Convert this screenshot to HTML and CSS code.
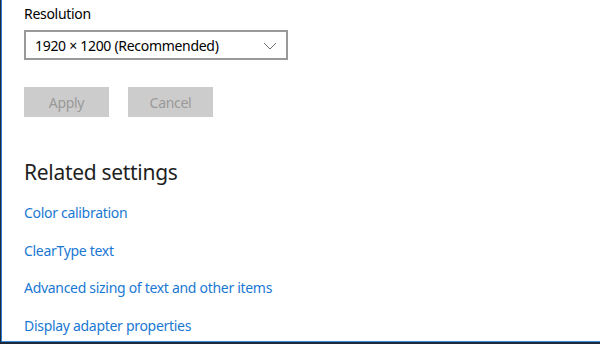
FILE: index.html
```html
<!DOCTYPE html>
<html>
<head>
	<meta charset="utf-8">
	<title>Display settings</title>
	<link rel="stylesheet" href="styles.css">
</head>
<body>
	<div class="window">
		<section class="resolution">
			<div class="label">Resolution</div>
			<div class="select">
				<span>1920 × 1200 (Recommended)</span>
				<svg class="chevron" width="14" height="8" viewBox="0 0 14 8">
					<path d="M1 1 L7 7 L13 1" fill="none" stroke="#6f6f6f" stroke-width="1"/>
				</svg>
			</div>
			<div class="buttons">
				<button class="btn" disabled>Apply</button>
				<button class="btn" disabled>Cancel</button>
			</div>
		</section>

		<section class="related">
			<h2>Related settings</h2>
			<ul class="links">
				<li><a href="#">Color calibration</a></li>
				<li><a href="#">ClearType text</a></li>
				<li><a href="#">Advanced sizing of text and other items</a></li>
				<li><a href="#">Display adapter properties</a></li>
			</ul>
		</section>
	</div>
</body>
</html>
```

FILE: styles.css
```css
html, body {
	margin: 0; height: 100%;
}
body {
	background-color: #1c2a3a; font-family: 'Noto Sans', 'Open Sans', sans-serif; overflow: hidden; letter-spacing: -0.3px;
}
.window {
	background: #fff; margin-left: 1px; height: 342px; box-sizing: border-box;
	border-left: 1px solid #2b7cd3; border-bottom: 1px solid #3a8be0;
	padding: 4px 0 0 22px;
}
.label {
	font-size: 14px; line-height: 20px; color: #000;
}
.select {
	margin-top: 6px; width: 264px; height: 30px; box-sizing: border-box;
	border: 2px solid #999; display: flex; align-items: center; justify-content: space-between;
	padding: 0 9px 0 9px; font-size: 14px; color: #000;
}
.chevron { margin-top: 1px; }
.buttons {
	display: flex; gap: 19px; margin-top: 27px;
}
.btn {
	width: 85px; height: 30px; border: none; background: #ccc; color: #999;
	font-family: inherit; font-size: 14px; padding: 0; letter-spacing: inherit;
}
.related h2 {
	font-size: 21px; font-weight: normal; color: #1f1f1f; margin: 40px 0 0; line-height: 30px;
}
.links {
	list-style: none; margin: 0; padding: 0;
}
.links li {
	font-size: 14px; line-height: 20px; margin-top: 17.5px;
}
.links li:first-child { margin-top: 16px; }
.links a {
	color: #1a78d3; text-decoration: none;
}
```
